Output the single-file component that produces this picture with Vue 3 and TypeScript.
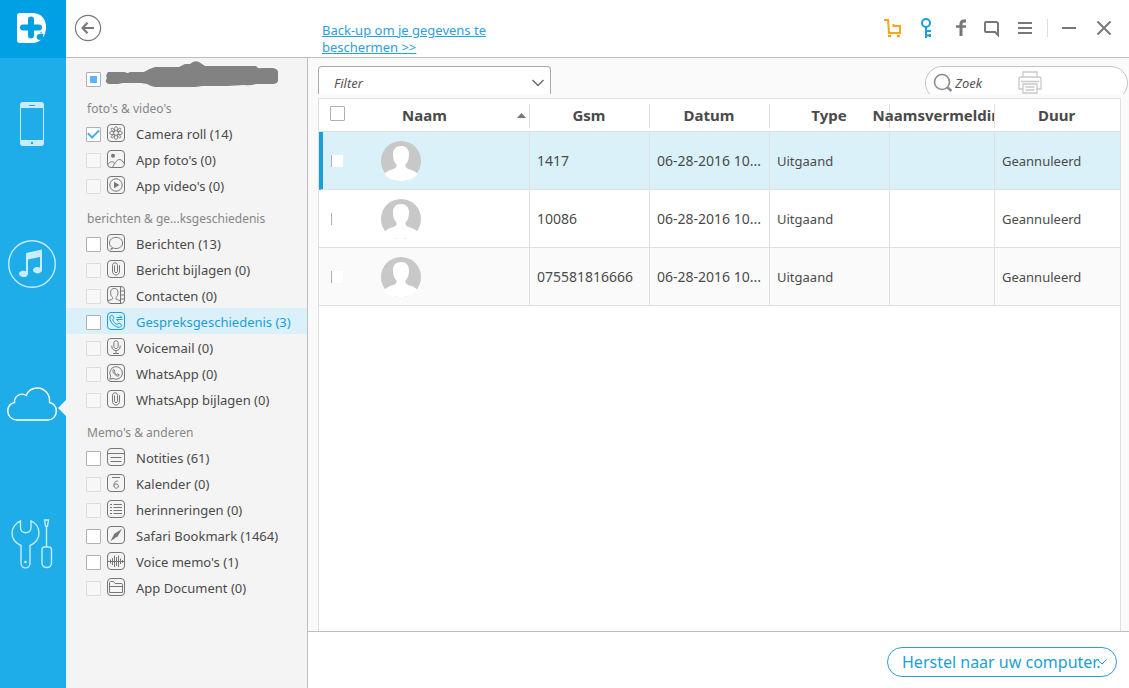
<script setup lang="ts">
import { ref } from 'vue'

interface Item { label: string; icon: string; enabled: boolean; checked?: boolean }
interface Group { title: string; items: Item[] }
interface Call { phone: string; date: string; type: string; duration: string }

const groups = ref<Group[]>([
  {
    title: "foto's & video's",
    items: [
      { label: 'Camera roll (14)', icon: 'flower', enabled: true, checked: true },
      { label: "App foto's (0)", icon: 'photo', enabled: false },
      { label: "App video's (0)", icon: 'play', enabled: false },
    ],
  },
  {
    title: 'berichten & ge...ksgeschiedenis',
    items: [
      { label: 'Berichten (13)', icon: 'bubble', enabled: true },
      { label: 'Bericht bijlagen (0)', icon: 'clip', enabled: false },
      { label: 'Contacten (0)', icon: 'contact', enabled: false },
      { label: 'Gespreksgeschiedenis (3)', icon: 'call', enabled: true },
      { label: 'Voicemail (0)', icon: 'mic', enabled: false },
      { label: 'WhatsApp (0)', icon: 'whatsapp', enabled: false },
      { label: 'WhatsApp bijlagen (0)', icon: 'clip', enabled: false },
    ],
  },
  {
    title: "Memo's & anderen",
    items: [
      { label: 'Notities (61)', icon: 'note', enabled: true },
      { label: 'Kalender (0)', icon: 'calendar', enabled: false },
      { label: 'herinneringen (0)', icon: 'list', enabled: false },
      { label: 'Safari Bookmark (1464)', icon: 'compass', enabled: true },
      { label: "Voice memo's (1)", icon: 'wave', enabled: true },
      { label: 'App Document (0)', icon: 'folder', enabled: false },
    ],
  },
])

// Stroked outlines, drawn inside an 18px rounded frame
const strokes: Record<string, string> = {
  flower: 'M9 7.2C6.8 5.6 7 2.8 9 2.8S11.2 5.6 9 7.2M9 10.8C6.8 12.4 7 15.2 9 15.2S11.2 12.4 9 10.8M7.2 9C5.6 6.8 2.8 7 2.8 9S5.6 11.2 7.2 9M10.8 9C12.4 6.8 15.2 7 15.2 9S12.4 11.2 10.8 9M7.7 7.7C5 7.6 3.4 5.2 4.5 4.5S7.6 5 7.7 7.7M10.3 7.7C10.4 5 12.8 3.4 13.5 4.5S13 7.6 10.3 7.7M7.7 10.3C5 10.4 3.4 12.8 4.5 13.5S7.6 13 7.7 10.3M10.3 10.3C10.4 13 12.8 14.6 13.5 13.5S13 10.4 10.3 10.3',
  photo: 'M1 14.5C3 11 6 11 8 13.5M5.5 17.5C8 12 10.5 9.5 12.5 9.5S16 11.5 17.2 13.5',
  play: 'M15.2 9A6.2 6.2 0 1 1 2.8 9A6.2 6.2 0 1 1 15.2 9Z',
  bubble: 'M3.6 15.2L5.6 13.7C3.6 12.7 2.4 11 2.4 9C2.4 5.8 5.3 3.4 9 3.4S15.6 5.8 15.6 9S12.7 14.5 9 14.5C8 14.5 7.2 14.4 6.4 14.1C5.6 14.8 4.6 15.2 3.6 15.2Z',
  clip: 'M7.5 5.5V11.3C7.5 13.1 10.5 13.1 10.5 11.3V5.3C10.5 2 5.5 2 5.5 5.3V11C5.500 16.400 12.500 16.400 12.500 11V5.2',
  contact: 'M1 14.5C4 13.8 5.8 13.5 5.8 12.2C5.8 11 3.6 10.5 3.6 6.5C3.6 3.8 5.2 2.4 7.3 2.4S11 3.8 11 6.5C11 10.5 8.8 11 8.8 12.2C8.8 13.5 11 14 13 14.5M13.5 1V17M13.5 5H17M13.5 9H17M13.5 13H17',
  call: 'M4.2 3.3C5.2 2.6 6.8 5.2 6.8 6C6.8 6.8 5.6 7.2 5.8 8C6.2 9.8 8.5 12 10 12.3C10.8 12.4 11.2 11.2 12 11.2C12.8 11.2 15.3 12.8 14.6 13.8C13.6 15.6 11.5 15.6 9.5 14.7C6.4 13.3 3.5 10.3 3 7.4C2.6 5.5 3 4.2 4.2 3.3ZM9.5 5.500H15L13 3.500M15.500 7.500H9.5L11.5 9.5',
  mic: 'M9 2.8C7.7 2.8 6.9 3.7 6.9 4.9V8.5C6.9 11.2 11.1 11.2 11.1 8.5V4.9C11.1 3.7 10.3 2.8 9 2.8ZM4.8 7.5V8.5C4.8 13.8 13.2 13.8 13.2 8.5V7.5M9 12.5V15.2M6 15.5H12',
  whatsapp: 'M2.8 15.2L3.7 12.2A6.3 6.3 0 1 1 6.1 14.5ZM6.3 5.7C5.4 6.4 5.8 8 7.1 9.6C8.6 11.5 10.7 12.8 11.9 11.7L12.2 10.8L10.5 9.9L9.7 10.7C8.6 10.2 7.8 9.3 7.3 8.1L7.9 7.4L7.1 5.7Z',
  note: 'M1 5.5H17M3.5 9.5H14.5M3.5 13.5H14.5',
  calendar: 'M5 3.5H13M10.9 7C7.4 7.2 6.8 9.8 6.9 11.5C7 15.3 11.6 14.9 11.4 12C11.2 9.2 7.6 9.4 7 11.5',
  list: 'M6.5 4.5H15M6.5 7.5H15M6.5 10.5H15M6.5 13.5H15M3 4.5H5M3 7.5H5M3 10.5H5M3 13.5H5',
  compass: '',
  wave: 'M1 9.5H17M3.5 7.5V11.5M5.5 6V13M7.5 3.5V15M9.5 5V14M11.5 3.5V15M13.5 6.5V12M15.5 8V11',
  folder: 'M2.5 14.5V4.5C2.5 3.8 3 3.5 3.5 3.5H6.5L8.2 5.5H14.5C15.2 5.5 15.5 6 15.5 6.5V14.5H2.5ZM2.5 8.5H15.5',
}
const fills: Record<string, string> = {
  photo: 'M8 5.8A2 2 0 1 1 4 5.8A2 2 0 1 1 8 5.8Z',
  play: 'M7 5.7L12.5 9L7 12.3Z',
  compass: 'M15 3L10.7 10.2L3.5 15.2L7.3 7.8Z',
}

const calls: Call[] = [
  { phone: '1417', date: '06-28-2016 10:12:45', type: 'Uitgaand', duration: 'Geannuleerd' },
  { phone: '10086', date: '06-28-2016 10:10:21', type: 'Uitgaand', duration: 'Geannuleerd' },
  { phone: '075581816666', date: '06-28-2016 10:08:02', type: 'Uitgaand', duration: 'Geannuleerd' },
]
const selected = ref(0)
const active = ref('call')
</script>

<template>
  <div class="app">
    <aside class="rail">
      <div class="logo">
        <svg width="30" height="32" viewBox="0 0 30 32" aria-hidden="true">
          <path d="M3 1H15C24 1 29 7 29 15C29 24 24 31 15 31H3Q0 31 0 28V4Q0 1 3 1Z" fill="#fff" />
          <path d="M14 7.500V23.500M6 15.500H22" stroke="#00a0e4" stroke-width="6" stroke-linecap="round" />
          <path d="M23.500 22Q25.500 21 26.500 22.500Q25 24 27 25.500Q26 28 24.500 28Q23 27.500 22 28Q19.500 27 19.500 24Q20.500 21.500 23.500 22ZM23 21.500Q23 20 25 19.500Q25 21 23 21.500Z" fill="#00a0e4" />
        </svg>
      </div>
      <nav class="modes">
        <button type="button" aria-label="Toestel">
          <svg width="24" height="44" viewBox="0 0 24 44">
            <rect width="24" height="44" rx="3" fill="#c9ecfb" />
            <rect x="1" y="6" width="22" height="32" fill="#1eade8" />
            <path d="M9 3.500H15" stroke="#1eade8" /><circle cx="12" cy="41" r="1.200" fill="#1eade8" />
          </svg>
        </button>
        <button type="button" aria-label="iTunes">
          <svg width="48" height="48" viewBox="0 0 48 48">
            <circle cx="24" cy="24" r="23.300" fill="none" stroke="#c9ecfb" stroke-width="1.400" />
            <path d="M18 13L34 9.500V30.500A4.500 3.200 0 1 1 32 27.500V17L20 19.500V34A4.500 3.200 0 1 1 18 31.200Z" fill="#c9ecfb" />
          </svg>
        </button>
        <button type="button" class="current" aria-label="iCloud">
          <svg width="50" height="34" viewBox="0 0 50 34" fill="none" stroke="#fff" stroke-width="1.400">
            <path d="M10 33H41C46 33 49.300 29 49.300 24C49.300 19.500 46.500 16.500 42.500 15.500C43.500 7 37 1 30.500 1C25 1 21 4 19.300 8.500C14 5 7 9 7.500 15.500C3 16.500 .8 20 .8 24C.8 29 4.500 33 10 33Z" />
          </svg>
        </button>
        <button type="button" aria-label="Gereedschap">
          <svg width="42" height="50" viewBox="0 0 42 50" fill="none" stroke="#c9ecfb" stroke-width="1.400">
            <path d="M9.500 2V8.500C9.500 15.500 20 15.500 20 8.500V2C25 4 28 9 28 14C28 20 24.500 24 19 26.500V44C19 50.500 10 50.500 10 44V26.500C4.500 24 1 20 1 14C1 9 4.500 4 9.500 2Z" />
            <circle cx="14.500" cy="43" r=".6" />
            <path d="M33.500 1H37.500L36.500 7H34.500ZM35.500 7V28M33 28H38Q40.500 28 40.500 31V44C40.500 50 31 50 31 44V31Q31 28 33 28Z" />
          </svg>
        </button>
      </nav>
    </aside>

    <div class="body">
      <header class="top">
        <button type="button" class="back" aria-label="Terug">
          <svg width="28" height="28" viewBox="0 0 28 28" fill="none" stroke="#777">
            <circle cx="14" cy="14" r="12.600" stroke-width="1.200" />
            <path d="M20 14H9M13.500 8.800L8.500 14L13.500 19.200" stroke-width="2" />
          </svg>
        </button>
        <a href="#" class="backup">Back-up om je gegevens te beschermen &gt;&gt;</a>
        <div class="tools">
          <button type="button" aria-label="Winkelwagen">
            <svg viewBox="0 0 20 20" fill="none" stroke="#f8a51b" stroke-width="2"><path d="M2 2H6L7 15H18V8H11.500V6" /><path d="M6 18H9M15 18H18" stroke-width="2.500" /></svg>
          </button>
          <button type="button" aria-label="Registreren">
            <svg viewBox="0 0 20 20" fill="none" stroke="#1a9fd8" stroke-width="2"><circle cx="11" cy="5" r="4" /><path d="M11 9V20M11 13H15M11 17.500H15M15 12V14M15 16V19" /></svg>
          </button>
          <button type="button" aria-label="Facebook">
            <svg viewBox="0 0 20 20" fill="none" stroke="#777" stroke-width="3"><path d="M18 3H16Q13 3 13 6V18" /><path d="M8 8.500H18" stroke-width="2.500" /></svg>
          </button>
          <button type="button" aria-label="Feedback">
            <svg viewBox="0 0 20 20" fill="none" stroke="#777" stroke-width="2"><path d="M5 4H15Q17 4 17 6V17L14 14H5Q4 14 4 13V5Q4 4 5 4Z" /></svg>
          </button>
          <button type="button" aria-label="Menu">
            <svg viewBox="0 0 20 20" fill="none" stroke="#777" stroke-width="2"><path d="M4 5H18M4 10H18M4 15H18" /></svg>
          </button>
          <span class="sep"></span>
          <button type="button" aria-label="Minimaliseren">
            <svg viewBox="0 0 20 20" fill="none" stroke="#777" stroke-width="2"><path d="M1 10H15" /></svg>
          </button>
          <button type="button" aria-label="Sluiten">
            <svg viewBox="0 0 20 20" fill="none" stroke="#777" stroke-width="2"><path d="M3.500 3.500L16.500 16.500M16.500 3.500L3.500 16.500" /></svg>
          </button>
        </div>
      </header>

      <div class="work">
        <aside class="tree">
          <label class="root">
            <input type="checkbox" class="partial" aria-label="Alles selecteren" />
            <svg width="174" height="28" viewBox="0 0 174 28" aria-hidden="true">
              <path d="M3 11H20Q22 13 25 11H39Q43 8 50 6H74Q78 4 80 3H85Q89-1 94 1Q97 3 100 5H151Q153 8 156 7H168Q173 8 173 11V20Q172 23 168 23H151Q145 25 139 24L122 25H98L90 26H50Q45 25 42 23L36 22H18L13 23H4Q0 22 1 19L2 17Q0 15 3 11Z" fill="#828282" />
            </svg>
          </label>
          <section v-for="g in groups" :key="g.title">
            <h2>{{ g.title }}</h2>
            <label v-for="it in g.items" :key="it.label" class="item" :class="{ active: it.icon === active }">
              <input v-model="it.checked" type="checkbox" :disabled="!it.enabled" />
              <svg width="18" height="18" viewBox="0 0 18 18" fill="none" stroke="currentColor" aria-hidden="true">
                <rect x=".5" y=".5" width="17" height="17" rx="3.500" />
                <path :d="strokes[it.icon]" />
                <path v-if="fills[it.icon]" :d="fills[it.icon]" fill="currentColor" stroke="none" />
              </svg>
              <span>{{ it.label }}</span>
            </label>
          </section>
        </aside>

        <main>
          <div class="bar">
            <div class="filter">
              <select aria-label="Filter"><option>Filter</option></select>
              <svg width="12" height="8" viewBox="0 0 12 8" fill="none" stroke="#666" stroke-width="1.300"><path d="M.5 1L6 6.500L11.500 1" /></svg>
            </div>
            <div class="search-clip">
              <div class="search">
                <svg width="20" height="20" viewBox="0 0 20 20" fill="none" stroke="#8c8c8c"><circle cx="9" cy="9" r="7.500" stroke-width="1.600" /><path d="M14.500 14.500L18.500 18" stroke-width="2.500" /></svg>
                <input type="text" placeholder="Zoek" aria-label="Zoek" />
                <button type="button" aria-label="Afdrukken">
                  <svg width="24" height="24" viewBox="0 0 24 24" fill="none" stroke="#c9c9c9" stroke-width="1.300"><path d="M5 6V1H19V6M5 18H1V8Q1 6 3 6H21Q23 6 23 8V18H19M3 10.500H21M5 13H19V22H5ZM7.500 16H16.500M7.500 19H16.500" /></svg>
                </button>
              </div>
            </div>
          </div>
          <div class="grid">
            <table>
              <colgroup><col class="c-name" /><col class="c-mid" /><col class="c-mid" /><col class="c-mid" /><col class="c-label" /><col /></colgroup>
              <thead>
                <tr>
                  <th>
                    <div class="name-head">
                      <input type="checkbox" aria-label="Alle rijen selecteren" />
                      <span>Naam</span>
                      <svg width="9" height="5" viewBox="0 0 9 5"><path d="M4.500 0L9 5H0Z" fill="#777" /></svg>
                    </div>
                  </th>
                  <th>Gsm</th>
                  <th>Datum</th>
                  <th>Type</th>
                  <th><div class="spill">Naamsvermelding</div></th>
                  <th class="cover">Duur</th>
                </tr>
              </thead>
              <tbody>
                <tr v-for="(c, i) in calls" :key="c.phone" :class="{ selected: i === selected }" @click="selected = i">
                  <td>
                    <div class="name-cell">
                      <input type="checkbox" :aria-label="'Selecteer ' + c.phone" />
                      <svg width="40" height="40" viewBox="0 0 40 40" aria-hidden="true">
                        <circle cx="20" cy="20" r="20" fill="#c8c8c8" />
                        <path d="M20 5C15 5 12 8.500 12 13C12 18 13 21 15.500 23.500C16 27 14 27.500 8 29.500Q4.500 31 3.500 33C7 38 14 40 20 40S33 38 36.500 33Q35.500 31 32 29.500C26 27.500 24 27 24.500 23.500C27 21 28 18 28 13C28 8.500 25 5 20 5Z" fill="#fff" />
                      </svg>
                    </div>
                  </td>
                  <td>{{ c.phone }}</td>
                  <td>{{ c.date.slice(0, 13) }}...</td>
                  <td class="word">{{ c.type }}</td>
                  <td></td>
                  <td class="word">{{ c.duration }}</td>
                </tr>
              </tbody>
            </table>
          </div>
          <footer>
            <button type="button" class="restore">
              Herstel naar uw computer.
              <svg width="10" height="6" viewBox="0 0 10 6" fill="none" stroke="currentColor"><path d="M.5 .5L5 5L9.500 .5" /></svg>
            </button>
          </footer>
        </main>
      </div>
    </div>
  </div>
</template>

<style>
body { margin: 0; }
</style>

<style scoped>
* { box-sizing: border-box; }
.app {
  display: flex;
  min-height: 100vh;
  font: 14px/20px "Noto Sans", "Open Sans", sans-serif;
  color: #4a4a4a;
  background: #fff;
}
button { padding: 0; border: 0; background: none; font: inherit; color: inherit; cursor: pointer; }
svg { display: block; flex: none; }
input[type="checkbox"] {
  appearance: none;
  flex: none;
  width: 15px;
  height: 15px;
  margin: 0;
  border: 1px solid #b0b0b0;
  border-radius: 1px;
  background: #fff;
}
input[type="checkbox"]:disabled { border-color: #ddd; background: #f7f7f7; }
input[type="checkbox"]:checked { display: grid; place-items: center; }
input[type="checkbox"]:checked::after {
  content: "";
  width: 9px;
  height: 5px;
  margin-bottom: 3px;
  border: solid #3fb0ea;
  border-width: 0 0 2px 2px;
  transform: rotate(-45deg);
}
.partial { display: grid; place-items: center; }
.partial::after { content: ""; width: 7px; height: 7px; background: #5cb5f8; }

.rail { flex: none; width: 66px; background: #1eade8; }
.logo { display: flex; align-items: center; justify-content: center; height: 58px; padding: 0 2px 2px 0; background: #00a0e4; }
.modes { display: flex; flex-direction: column; gap: 8px; }
.modes button { position: relative; display: flex; align-items: center; justify-content: center; height: 132px; padding-right: 2px; }
.current::after {
  content: "";
  position: absolute;
  right: 0;
  top: 62px;
  border: solid transparent;
  border-width: 8px 8px 8px 0;
  border-right-color: #f4f4f4;
}

.body { flex: 1; min-width: 0; display: flex; flex-direction: column; }
.top { display: flex; height: 58px; border-bottom: 1px solid #bdbdbd; padding: 0 15px 0 8px; }
.back { height: 56px; }
.backup { width: 176px; margin: 22px auto 0 220px; color: #2ba0dc; font-size: 13px; line-height: 17px; }
.tools { display: flex; align-items: center; gap: 13px; height: 56px; }
.tools svg { width: 20px; height: 20px; }
.sep { width: 1px; height: 18px; background: #ddd; }

.work { flex: 1; display: flex; min-height: 0; }
.tree { flex: none; width: 242px; background: #f4f4f4; border-right: 1px solid #bdbdbd; }
.root { display: flex; align-items: center; gap: 4px; height: 30px; padding: 12px 0 0 20px; }
.root svg { margin-bottom: 8px; }
h2 { margin: 0; padding: 11px 0 1px 21px; font-size: 12px; line-height: 20px; font-weight: 400; color: #868686; }
.item { display: flex; align-items: center; height: 26px; padding-left: 20px; font-size: 13px; }
.item input { margin-top: 2px; }
.item svg { margin: 0 11px 0 6px; color: #777; }
.item span { margin-top: 2px; }
.item.active, .item.active svg { color: #1a9fdb; }
.item.active { background: #daf1f9; }

main { flex: 1; min-width: 0; display: flex; flex-direction: column; background: #fafafa; }
.bar { display: flex; justify-content: space-between; padding: 8px 1px 4px 10px; }
.filter { display: flex; align-items: center; width: 233px; height: 28px; padding-right: 6px; border: 1px solid #aaa; border-bottom: 0; border-radius: 4px 4px 0 0; background: #fff; }
.filter select { appearance: none; flex: 1; height: 27px; margin: 0; padding: 5px 0 0 15px; border: 0; background: none; font: italic 13px/20px "Noto Sans", sans-serif; color: #555; }
.filter svg { margin-top: 4px; }
.search-clip { width: 203px; height: 28px; overflow: hidden; }
.search { display: flex; align-items: center; height: 34px; padding: 0 0 0 7px; border: 1px solid #c4c4c4; border-radius: 17px; background: #fff; }
.search input { width: 56px; margin: 0 7px 0 2px; padding: 0; border: 0; background: none; font: italic 13px/20px "Noto Sans", sans-serif; }
.search input::placeholder { color: #555; opacity: 1; }

.grid { flex: 1; margin: 0 8px 0 10px; border: solid #e0e0e0; border-width: 1px 1px 0; background: #fff; }
table { width: 100%; table-layout: fixed; border-collapse: separate; border-spacing: 0; }
.c-name { width: 211px; }
.c-mid { width: 120px; }
.c-label { width: 105px; }
th { position: relative; height: 33px; padding: 0; border-bottom: 1px solid #e0e0e0; font-size: 15px; font-weight: 700; text-align: center; }
th:not(:first-child) { padding-right: 2px; }
th:not(:last-child)::after { content: ""; position: absolute; right: 0; top: 5px; height: 24px; border-right: 1px solid #e0e0e0; }
.name-head { display: grid; grid-template-columns: 1fr auto 1fr; align-items: center; padding: 0 4px 0 11px; }
.name-head input { margin-bottom: 4px; }
.name-head span { margin-right: 7px; }
.name-head svg { justify-self: end; }
.spill { display: flex; justify-content: center; }
.cover { background: #fff; }
td { height: 58px; padding: 0 7px; border: solid #e0e0e0; border-width: 0 1px 1px 0; white-space: nowrap; }
td:first-child { padding-left: 12px; }
td:last-child { border-right: 0; }
.word { font-size: 13px; }
tbody tr:nth-child(odd) td { background: #fafafa; }
tbody tr.selected td { background: #daf1f9; }
tbody tr.selected td:first-child { border-left: 4px solid #1a9fd8; padding-left: 8px; }
.name-cell { display: flex; align-items: center; gap: 38px; }
.name-cell input { width: 12px; height: 12px; border-width: 0 0 0 1px; border-radius: 0; }

footer { display: flex; justify-content: flex-end; padding: 15px 12px 11px; border-top: 1px solid #bdbdbd; background: #fff; }
.restore { display: flex; align-items: center; width: 230px; height: 30px; padding-left: 14px; border: 1px solid #2b9fd6; border-radius: 15px; font-size: 16px; white-space: nowrap; color: #219fd5; }
.restore svg { margin-left: -4px; }
</style>
